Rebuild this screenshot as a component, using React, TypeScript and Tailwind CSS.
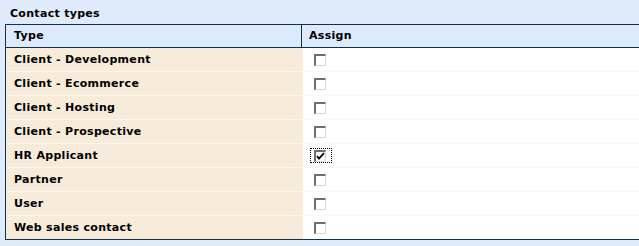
import React from "react";

const rows = [
  { name: "Client - Development", checked: false },
  { name: "Client - Ecommerce", checked: false },
  { name: "Client - Hosting", checked: false },
  { name: "Client - Prospective", checked: false },
  { name: "HR Applicant", checked: true, focused: true },
  { name: "Partner", checked: false },
  { name: "User", checked: false },
  { name: "Web sales contact", checked: false },
];

function Checkbox({ checked, focused }: { checked: boolean; focused?: boolean }) {
  return (
    <div
      className={
        "flex h-[13px] w-[20px] items-center pl-[3px] " +
        (focused ? "outline outline-1 outline-dotted outline-black" : "")
      }
    >
      <span className="flex h-[12px] w-[12px] border-t-2 border-l-2 border-b border-r border-t-[#6e6e6e] border-l-[#6e6e6e] border-b-[#d6d6d6] border-r-[#d6d6d6] bg-white">
        {checked && (
          <svg width="9" height="9" viewBox="0 0 9 9">
            <path d="M1 4 L3 6.5 L8 1" stroke="#000" strokeWidth="1.8" fill="none" />
          </svg>
        )}
      </span>
    </div>
  );
}

export default function App() {
  return (
    <div className="h-[246px] w-[639px] overflow-hidden bg-[#dfebfb] font-['DejaVu_Sans',Verdana,sans-serif] text-[11px] font-bold tracking-[0.3px] text-black">
      <div className="h-[24px] pl-[10px] pt-[7px] leading-[14px]">Contact types</div>
      <div className="ml-[5px] w-[660px] border border-[#0b3150]">
        <div className="flex h-[23px] border-b border-[#0b3150] bg-[#ddeafb]">
          <div className="flex w-[296px] items-center border-r border-[#0b3150] pl-[8px] pt-[1px]">Type</div>
          <div className="flex items-center pl-[7px] pt-[1px]">Assign</div>
        </div>
        {rows.map((row, i) => (
          <div
            key={row.name}
            className={"flex h-[23px] " + (i < rows.length - 1 ? "box-content border-b border-[#fdf9f2]" : "")}
          >
            <div className="flex w-[297px] items-center bg-[#f7ebda] pl-[8px] pt-[2px]">{row.name}</div>
            <div className="flex flex-1 items-center bg-white pl-[8px]">
              <Checkbox checked={row.checked} focused={row.focused} />
            </div>
          </div>
        ))}
      </div>
    </div>
  );
}
